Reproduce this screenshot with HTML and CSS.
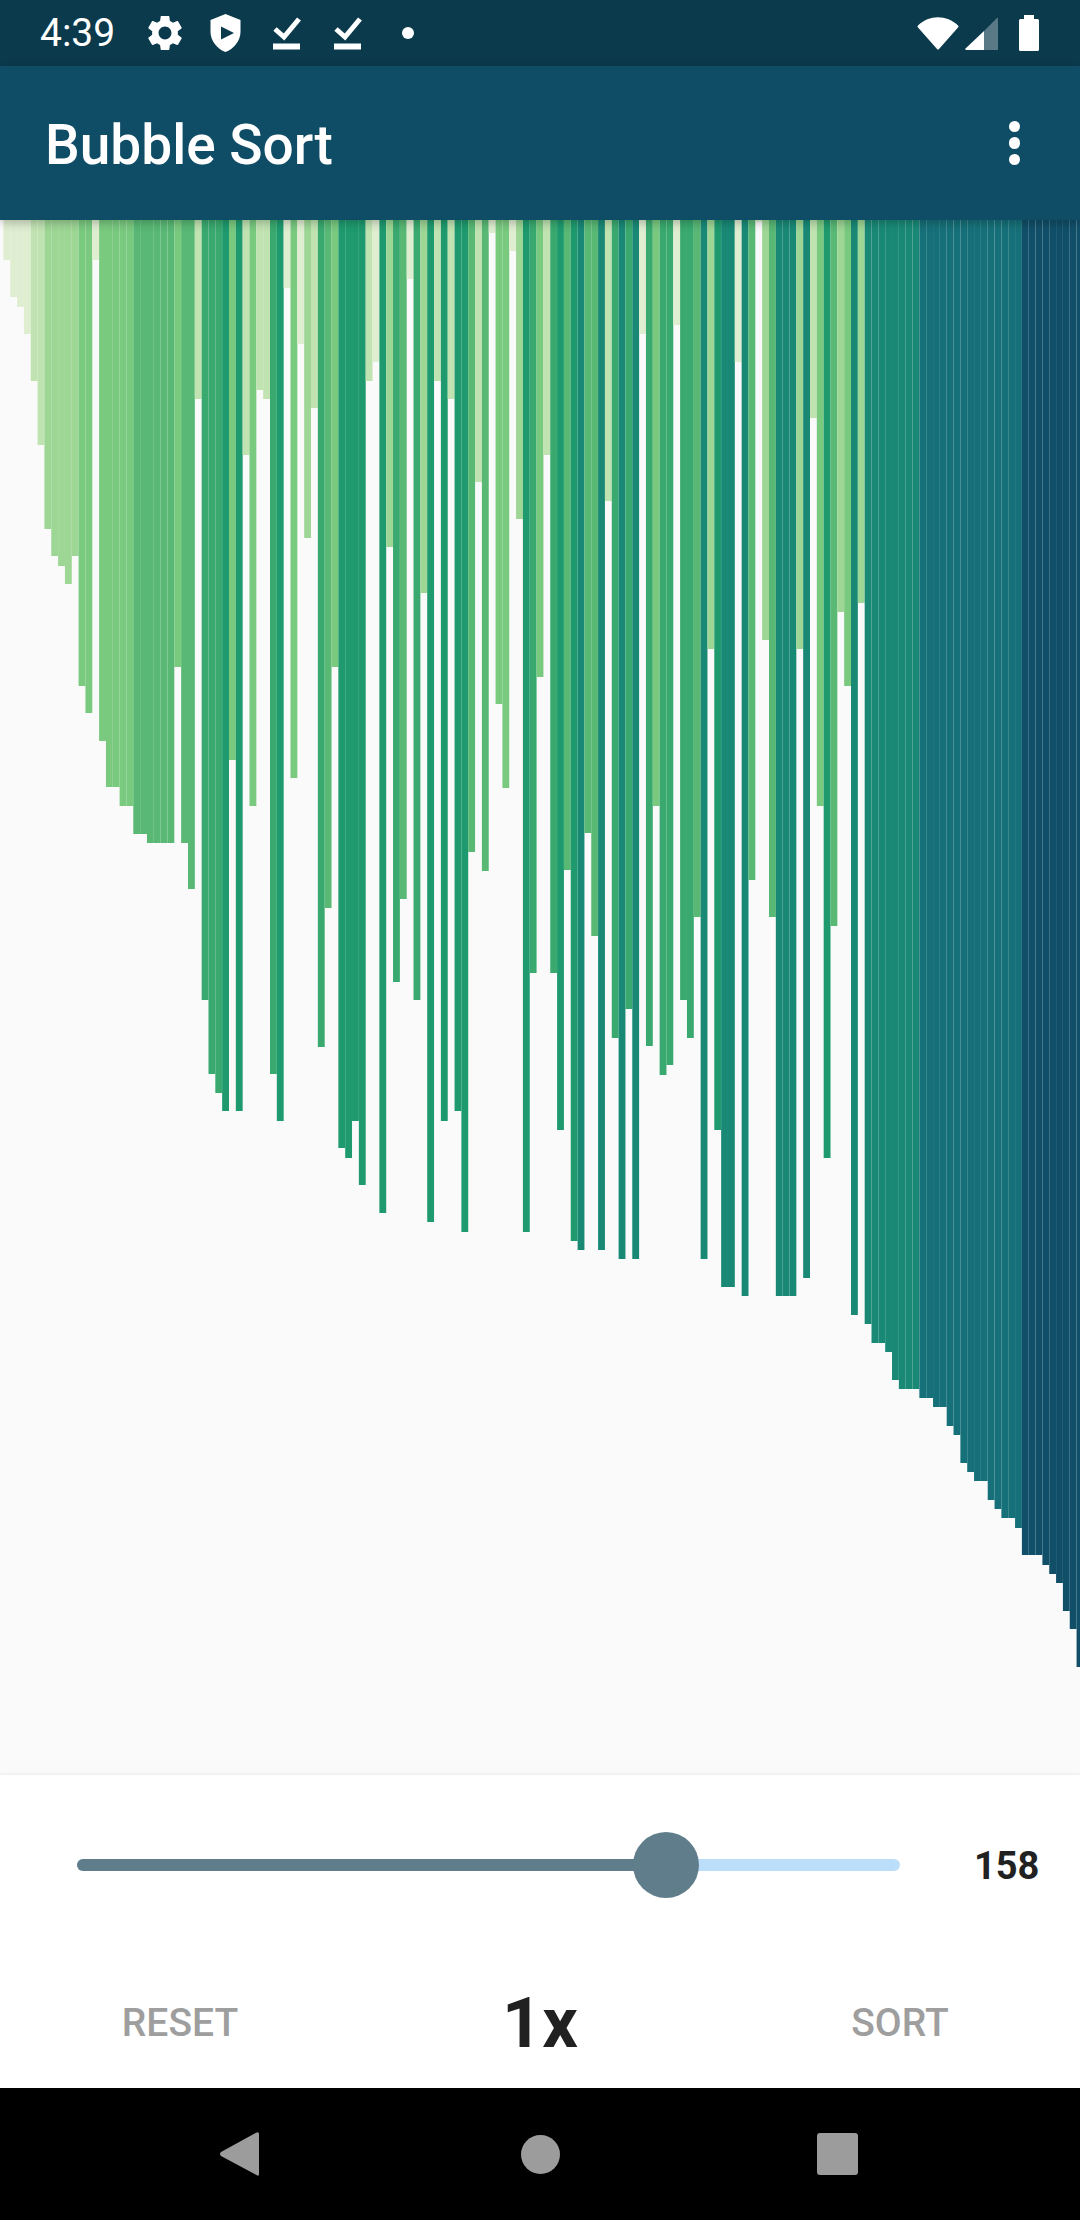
FILE: index.html
```html
<!DOCTYPE html>
<html lang="en">
<head>
<meta charset="utf-8">
<title>Bubble Sort</title>
<link rel="stylesheet" href="styles.css">
</head>
<body>
<div class="phone">
  <header class="status">
    <span class="time">4:39</span>
    <svg class="ico gear" viewBox="2.5 2.5 19 19"><path d="M19.14 12.94c.04-.3.06-.61.06-.94 0-.32-.02-.64-.07-.94l2.03-1.58c.18-.14.23-.41.12-.61l-1.92-3.32c-.12-.22-.37-.29-.59-.22l-2.39.96c-.5-.38-1.03-.7-1.62-.94l-.36-2.54c-.04-.24-.24-.41-.48-.41h-3.84c-.24 0-.43.17-.47.41l-.36 2.54c-.59.24-1.13.57-1.62.94l-2.39-.96c-.22-.08-.47 0-.59.22L2.74 8.87c-.12.21-.08.47.12.61l2.03 1.58c-.05.3-.09.63-.09.94s.02.64.07.94l-2.03 1.58c-.18.14-.23.41-.12.61l1.92 3.32c.12.22.37.29.59.22l2.39-.96c.5.38 1.03.7 1.62.94l.36 2.54c.05.24.24.41.48.41h3.84c.24 0 .44-.17.47-.41l.36-2.54c.59-.24 1.13-.56 1.62-.94l2.39.96c.22.08.47 0 .59-.22l1.92-3.32c.12-.22.07-.47-.12-.61l-2.01-1.58zM12 15.6c-1.98 0-3.6-1.62-3.6-3.6s1.62-3.6 3.6-3.6 3.6 1.62 3.6 3.6-1.62 3.6-3.6 3.6z"/></svg>
    <svg class="ico shield" viewBox="0 0 30 38"><path fill-rule="evenodd" d="M15 0 L30 6 V18 C30 27 23 35 15 38 C7 35 0 27 0 18 V6 Z M10.5 12.5 V25.5 L23.5 19 Z"/></svg>
    <svg class="ico check" viewBox="0 0 28 34"><path class="stroke" d="M2 13 L11 21 L26 3"/><rect x="0" y="27.5" width="27" height="6"/></svg>
    <svg class="ico check second" viewBox="0 0 28 34"><path class="stroke" d="M2 13 L11 21 L26 3"/><rect x="0" y="27.5" width="27" height="6"/></svg>
    <span class="dot"></span>
    <span class="spacer"></span>
    <svg class="ico wifi" viewBox="0 0 42 33"><path d="M1 8.5 C12 -2.5 30 -2.5 41 8.5 Q42 9.5 41 10.5 L22 32 Q21 33 20 32 L1 10.5 Q0 9.5 1 8.5 Z"/></svg>
    <svg class="ico signal" viewBox="0 0 33 33"><path d="M0 32 L19 14 V33 H1 Z"/><path class="dim" d="M19 14 L32 1 Q33 0 33 2 V33 H19 Z"/></svg>
    <svg class="ico battery" viewBox="0 0 20 36"><path d="M5 0 H15 V4 H18.5 Q20 4 20 5.5 V34.5 Q20 36 18.5 36 H1.5 Q0 36 0 34.5 V5.5 Q0 4 1.5 4 H5 Z"/></svg>
  </header>
  <div class="appbar">
    <h1 class="title">Bubble Sort</h1>
    <div class="overflow"><i></i><i></i><i></i></div>
  </div>
  <main class="chart">
    <svg class="bars" viewBox="0 0 158 1555" preserveAspectRatio="none">
      <rect class="b1" x="0.5" width="1" height="40"/>
      <rect class="b1" x="1.5" width="1" height="77"/>
      <rect class="b1" x="2.5" width="1" height="87"/>
      <rect class="b1" x="3.5" width="1" height="114"/>
      <rect class="b2" x="4.5" width="1" height="161"/>
      <rect class="b2" x="5.5" width="1" height="225"/>
      <rect class="b3" x="6.5" width="1" height="309"/>
      <rect class="b3" x="7.5" width="1" height="336"/>
      <rect class="b3" x="8.5" width="1" height="346"/>
      <rect class="b3" x="9.5" width="1" height="364"/>
      <rect class="b3" x="10.5" width="1" height="336"/>
      <rect class="b4" x="11.5" width="1" height="466"/>
      <rect class="b4" x="12.5" width="1" height="493"/>
      <rect class="b1" x="13.5" width="1" height="40"/>
      <rect class="b4" x="14.5" width="1" height="521"/>
      <rect class="b4" x="15.5" width="1" height="567"/>
      <rect class="b4" x="16.5" width="1" height="567"/>
      <rect class="b4" x="17.5" width="1" height="586"/>
      <rect class="b4" x="18.5" width="1" height="586"/>
      <rect class="b5" x="19.5" width="1" height="614"/>
      <rect class="b5" x="20.5" width="1" height="614"/>
      <rect class="b5" x="21.5" width="1" height="623"/>
      <rect class="b5" x="22.5" width="1" height="623"/>
      <rect class="b5" x="23.5" width="1" height="623"/>
      <rect class="b5" x="24.5" width="1" height="623"/>
      <rect class="b4" x="25.5" width="1" height="447"/>
      <rect class="b5" x="26.5" width="1" height="623"/>
      <rect class="b5" x="27.5" width="1" height="669"/>
      <rect class="b2" x="28.5" width="1" height="179"/>
      <rect class="b6" x="29.5" width="1" height="780"/>
      <rect class="b6" x="30.5" width="1" height="854"/>
      <rect class="b6" x="31.5" width="1" height="873"/>
      <rect class="b7" x="32.5" width="1" height="891"/>
      <rect class="b4" x="33.5" width="1" height="540"/>
      <rect class="b7" x="34.5" width="1" height="891"/>
      <rect class="b2" x="35.5" width="1" height="235"/>
      <rect class="b4" x="36.5" width="1" height="586"/>
      <rect class="b2" x="37.5" width="1" height="170"/>
      <rect class="b2" x="38.5" width="1" height="179"/>
      <rect class="b6" x="39.5" width="1" height="854"/>
      <rect class="b7" x="40.5" width="1" height="901"/>
      <rect class="b1" x="41.5" width="1" height="68"/>
      <rect class="b4" x="42.5" width="1" height="558"/>
      <rect class="b1" x="43.5" width="1" height="124"/>
      <rect class="b3" x="44.5" width="1" height="318"/>
      <rect class="b2" x="45.5" width="1" height="188"/>
      <rect class="b6" x="46.5" width="1" height="827"/>
      <rect class="b5" x="47.5" width="1" height="688"/>
      <rect class="b4" x="48.5" width="1" height="447"/>
      <rect class="b7" x="49.5" width="1" height="928"/>
      <rect class="b7" x="50.5" width="1" height="938"/>
      <rect class="b7" x="51.5" width="1" height="901"/>
      <rect class="b7" x="52.5" width="1" height="965"/>
      <rect class="b2" x="53.5" width="1" height="161"/>
      <rect class="b1" x="54.5" width="1" height="142"/>
      <rect class="b7" x="55.5" width="1" height="993"/>
      <rect class="b3" x="56.5" width="1" height="327"/>
      <rect class="b6" x="57.5" width="1" height="762"/>
      <rect class="b5" x="58.5" width="1" height="679"/>
      <rect class="b1" x="59.5" width="1" height="59"/>
      <rect class="b6" x="60.5" width="1" height="780"/>
      <rect class="b3" x="61.5" width="1" height="373"/>
      <rect class="b7" x="62.5" width="1" height="1002"/>
      <rect class="b2" x="63.5" width="1" height="161"/>
      <rect class="b7" x="64.5" width="1" height="901"/>
      <rect class="b2" x="65.5" width="1" height="179"/>
      <rect class="b7" x="66.5" width="1" height="891"/>
      <rect class="b7" x="67.5" width="1" height="1012"/>
      <rect class="b5" x="68.5" width="1" height="632"/>
      <rect class="b2" x="69.5" width="1" height="262"/>
      <rect class="b5" x="70.5" width="1" height="651"/>
      <rect class="b1" x="71.5" width="1" height="13"/>
      <rect class="b4" x="72.5" width="1" height="484"/>
      <rect class="b4" x="73.5" width="1" height="568"/>
      <rect class="b1" x="74.5" width="1" height="31"/>
      <rect class="b3" x="75.5" width="1" height="299"/>
      <rect class="b7" x="76.5" width="1" height="1012"/>
      <rect class="b6" x="77.5" width="1" height="753"/>
      <rect class="b4" x="78.5" width="1" height="457"/>
      <rect class="b2" x="79.5" width="1" height="235"/>
      <rect class="b6" x="80.5" width="1" height="753"/>
      <rect class="b7" x="81.5" width="1" height="910"/>
      <rect class="b5" x="82.5" width="1" height="650"/>
      <rect class="b7" x="83.5" width="1" height="1021"/>
      <rect class="b8" x="84.5" width="1" height="1030"/>
      <rect class="b5" x="85.5" width="1" height="613"/>
      <rect class="b5" x="86.5" width="1" height="716"/>
      <rect class="b8" x="87.5" width="1" height="1030"/>
      <rect class="b2" x="88.5" width="1" height="281"/>
      <rect class="b6" x="89.5" width="1" height="818"/>
      <rect class="b8" x="90.5" width="1" height="1039"/>
      <rect class="b6" x="91.5" width="1" height="789"/>
      <rect class="b8" x="92.5" width="1" height="1039"/>
      <rect class="b1" x="93.5" width="1" height="114"/>
      <rect class="b6" x="94.5" width="1" height="826"/>
      <rect class="b4" x="95.5" width="1" height="586"/>
      <rect class="b6" x="96.5" width="1" height="855"/>
      <rect class="b6" x="97.5" width="1" height="845"/>
      <rect class="b1" x="98.5" width="1" height="105"/>
      <rect class="b6" x="99.5" width="1" height="780"/>
      <rect class="b6" x="100.5" width="1" height="818"/>
      <rect class="b5" x="101.5" width="1" height="697"/>
      <rect class="b8" x="102.5" width="1" height="1039"/>
      <rect class="b3" x="103.5" width="1" height="429"/>
      <rect class="b7" x="104.5" width="1" height="910"/>
      <rect class="b8" x="105.5" width="1" height="1067"/>
      <rect class="b8" x="106.5" width="1" height="1067"/>
      <rect class="b1" x="107.5" width="1" height="142"/>
      <rect class="b8" x="108.5" width="1" height="1076"/>
      <rect class="b5" x="109.5" width="1" height="660"/>
      <rect class="b1" x="110.5" width="1" height="2"/>
      <rect class="b3" x="111.5" width="1" height="420"/>
      <rect class="b5" x="112.5" width="1" height="697"/>
      <rect class="b8" x="113.5" width="1" height="1076"/>
      <rect class="b8" x="114.5" width="1" height="1076"/>
      <rect class="b8" x="115.5" width="1" height="1076"/>
      <rect class="b3" x="116.5" width="1" height="429"/>
      <rect class="b8" x="117.5" width="1" height="1058"/>
      <rect class="b2" x="118.5" width="1" height="198"/>
      <rect class="b4" x="119.5" width="1" height="586"/>
      <rect class="b7" x="120.5" width="1" height="938"/>
      <rect class="b5" x="121.5" width="1" height="706"/>
      <rect class="b3" x="122.5" width="1" height="392"/>
      <rect class="b4" x="123.5" width="1" height="466"/>
      <rect class="b8" x="124.5" width="1" height="1095"/>
      <rect class="b3" x="125.5" width="1" height="383"/>
      <rect class="b8" x="126.5" width="1" height="1104"/>
      <rect class="b8" x="127.5" width="1" height="1123"/>
      <rect class="b8" x="128.5" width="1" height="1123"/>
      <rect class="b8" x="129.5" width="1" height="1132"/>
      <rect class="b8" x="130.5" width="1" height="1160"/>
      <rect class="b8" x="131.5" width="1" height="1169"/>
      <rect class="b8" x="132.5" width="1" height="1169"/>
      <rect class="b8" x="133.5" width="1" height="1169"/>
      <rect class="b9" x="134.5" width="1" height="1178"/>
      <rect class="b9" x="135.5" width="1" height="1178"/>
      <rect class="b9" x="136.5" width="1" height="1187"/>
      <rect class="b9" x="137.5" width="1" height="1187"/>
      <rect class="b9" x="138.5" width="1" height="1206"/>
      <rect class="b9" x="139.5" width="1" height="1215"/>
      <rect class="b9" x="140.5" width="1" height="1243"/>
      <rect class="b9" x="141.5" width="1" height="1252"/>
      <rect class="b9" x="142.5" width="1" height="1261"/>
      <rect class="b9" x="143.5" width="1" height="1261"/>
      <rect class="b9" x="144.5" width="1" height="1280"/>
      <rect class="b9" x="145.5" width="1" height="1289"/>
      <rect class="b9" x="146.5" width="1" height="1298"/>
      <rect class="b9" x="147.5" width="1" height="1298"/>
      <rect class="b9" x="148.5" width="1" height="1308"/>
      <rect class="b10" x="149.5" width="1" height="1335"/>
      <rect class="b10" x="150.5" width="1" height="1335"/>
      <rect class="b10" x="151.5" width="1" height="1335"/>
      <rect class="b10" x="152.5" width="1" height="1345"/>
      <rect class="b10" x="153.5" width="1" height="1354"/>
      <rect class="b10" x="154.5" width="1" height="1363"/>
      <rect class="b10" x="155.5" width="1" height="1391"/>
      <rect class="b10" x="156.5" width="1" height="1409"/>
      <rect class="b10" x="157.5" width="1" height="1447"/>
    </svg>
  </main>
  <section class="controls">
    <div class="slider-row">
      <div class="track">
        <div class="fill" style="width:71.6%"></div>
        <div class="thumb" style="left:71.6%"></div>
      </div>
      <span class="value">158</span>
    </div>
    <div class="buttons">
      <span class="btn">RESET</span>
      <span class="speed">1x</span>
      <span class="btn">SORT</span>
    </div>
  </section>
  <footer class="nav">
    <svg class="back" viewBox="0 0 39 44"><path d="M36 .8 Q39 -1 39 2 V42 Q39 45 36.5 43 L1 24 Q-1 22 1 20 Z"/></svg>
    <span class="home"></span>
    <span class="recent"></span>
  </footer>
</div>
</body>
</html>
```

FILE: styles.css
```css
html, body { margin: 0; padding: 0; }
body { font-family: Roboto, "Liberation Sans", sans-serif; background: #fafafa; }

.phone { width: 1080px; height: 2220px; display: flex; flex-direction: column; overflow: hidden; }

/* status bar */
.status { height: 66px; flex: none; background: #0b3a4d; color: #fff; display: flex; align-items: center; padding: 0 41px 0 40px; box-sizing: border-box; }
.time { font-size: 39px; line-height: 66px; width: 74px; }
.ico { display: block; fill: #fff; flex: none; }
.gear { width: 34px; height: 34px; margin-left: 34px; }
.shield { width: 31px; height: 38px; margin-left: 28px; }
.check { width: 28px; height: 34px; margin-left: 32px; }
.check.second { margin-left: 33px; }
.stroke { fill: none; stroke: #fff; stroke-width: 5; }
.dot { width: 12px; height: 12px; border-radius: 50%; background: #fff; margin-left: 40px; }
.spacer { flex: 1; }
.wifi { width: 42px; height: 33px; }
.signal { width: 33px; height: 33px; margin-left: 6px; }
.dim { opacity: .32; }
.battery { width: 20px; height: 36px; margin-left: 21px; }

/* app bar */
.appbar { height: 154px; flex: none; background: #0f4d67; color: #fff; display: flex; align-items: center; justify-content: space-between; padding: 0 60px 0 45px; box-sizing: border-box; position: relative; z-index: 2; box-shadow: 0 3px 9px rgba(0,0,0,.24); }
.title { margin: 0; font-size: 55px; font-weight: 500; line-height: 72px; position: relative; top: 2px; }
.overflow { display: flex; flex-direction: column; gap: 5px; }
.overflow i { display: block; width: 11.5px; height: 11.5px; border-radius: 50%; background: #fff; }

/* chart */
.chart { flex: 1; min-height: 0; background: #fafafa; }
.bars { display: block; width: 1080px; height: 100%; }
.b1 { fill: #dfeed1; }
.b2 { fill: #c0e3b1; }
.b3 { fill: #9dd695; }
.b4 { fill: #79c97f; }
.b5 { fill: #58b874; }
.b6 { fill: #39a96f; }
.b7 { fill: #1e9a6e; }
.b8 { fill: #198976; }
.b9 { fill: #167079; }
.b10 { fill: #114f69; }

/* controls */
.controls { height: 313px; flex: none; background: #fff; display: flex; flex-direction: column; position: relative; box-shadow: 0 -1px 3px rgba(0,0,0,.07); }
.slider-row { height: 180px; flex: none; display: flex; align-items: center; gap: 74px; padding: 0 42px 0 77px; }
.track { flex: 1; height: 12px; border-radius: 6px; background: #bbdefb; position: relative; }
.fill { height: 100%; border-radius: 6px 0 0 6px; background: #607d8b; }
.thumb { position: absolute; top: 50%; width: 66px; height: 66px; margin: -33px 0 0 -33px; border-radius: 50%; background: #607d8b; }
.value { width: 64px; padding-top: 2px; font-size: 38px; font-weight: 700; color: #212121; text-align: right; }
.buttons { flex: 1; display: grid; grid-template-columns: repeat(3, 1fr); align-items: center; justify-items: center; padding-top: 2px; }
.btn { font-size: 39px; font-weight: 500; color: #9e9e9e; }
.speed { font-size: 70px; font-weight: 700; color: #212121; }

/* navigation bar */
.nav { height: 132px; flex: none; background: #000; display: flex; align-items: center; position: relative; }
.back { width: 39px; height: 44px; fill: #9c9c9c; margin-left: 220px; display: block; }
.home { width: 39px; height: 39px; border-radius: 50%; background: #9c9c9c; margin-left: 262px; }
.recent { width: 41px; height: 42px; border-radius: 3px; background: #9c9c9c; margin-left: 257px; }
```
